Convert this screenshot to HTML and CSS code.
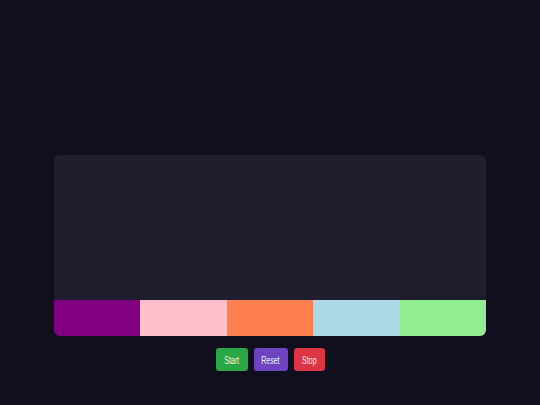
FILE: index.html
```html
<!DOCTYPE html>
<html>
<head>
<meta charset="utf-8">
<link rel="stylesheet" href="styles.css">
</head>
<body>
<div class="page">
  <div class="stage">
    <div class="canvas"></div>
    <div class="bars">
      <div class="bar purple"></div>
      <div class="bar pink"></div>
      <div class="bar coral"></div>
      <div class="bar blue"></div>
      <div class="bar green"></div>
    </div>
  </div>
  <div class="controls">
    <button class="btn start"><span class="label">Start</span></button>
    <button class="btn reset"><span class="label">Reset</span></button>
    <button class="btn stop"><span class="label">Stop</span></button>
  </div>
</div>
</body>
</html>
```
FILE: styles.css
```css
html, body {
  margin: 0;
  padding: 0;
  background: #0f0f1e;
  width: 540px;
  height: 405px;
  overflow: hidden;
}
.page {
  padding-top: 155px;
  display: flex;
  flex-direction: column;
  align-items: center;
}
.stage {
  width: 432px;
  height: 181px;
  background: #1e1e2f;
  border-radius: 6px;
  overflow: hidden;
  display: flex;
  flex-direction: column;
}
.canvas {
  flex: 1;
}
.bars {
  height: 36px;
  display: flex;
}
.bar { flex: 1; }
.purple { background: #800080; }
.pink { background: #ffc0cb; }
.coral { background: #ff7f50; }
.blue { background: #add8e6; }
.green { background: #90ee90; }
.controls {
  margin-top: 12px;
  display: flex;
  gap: 6px;
  margin-left: 0;
}
.btn {
  border: none;
  border-radius: 3px;
  color: #f4f4f4;
  font-family: "Liberation Sans", Arial, sans-serif;
  font-size: 11px;
  line-height: 12px;
  height: 23px;
  padding: 0;
  display: flex;
  align-items: center;
  justify-content: center;
}
.label {
  display: inline-block;
  transform: scaleX(0.64);
  white-space: nowrap;
}
.start { background: #28a745; width: 32px; }
.reset { background: #6f42c1; width: 34px; }
.stop { background: #dc3545; width: 31px; }
```
